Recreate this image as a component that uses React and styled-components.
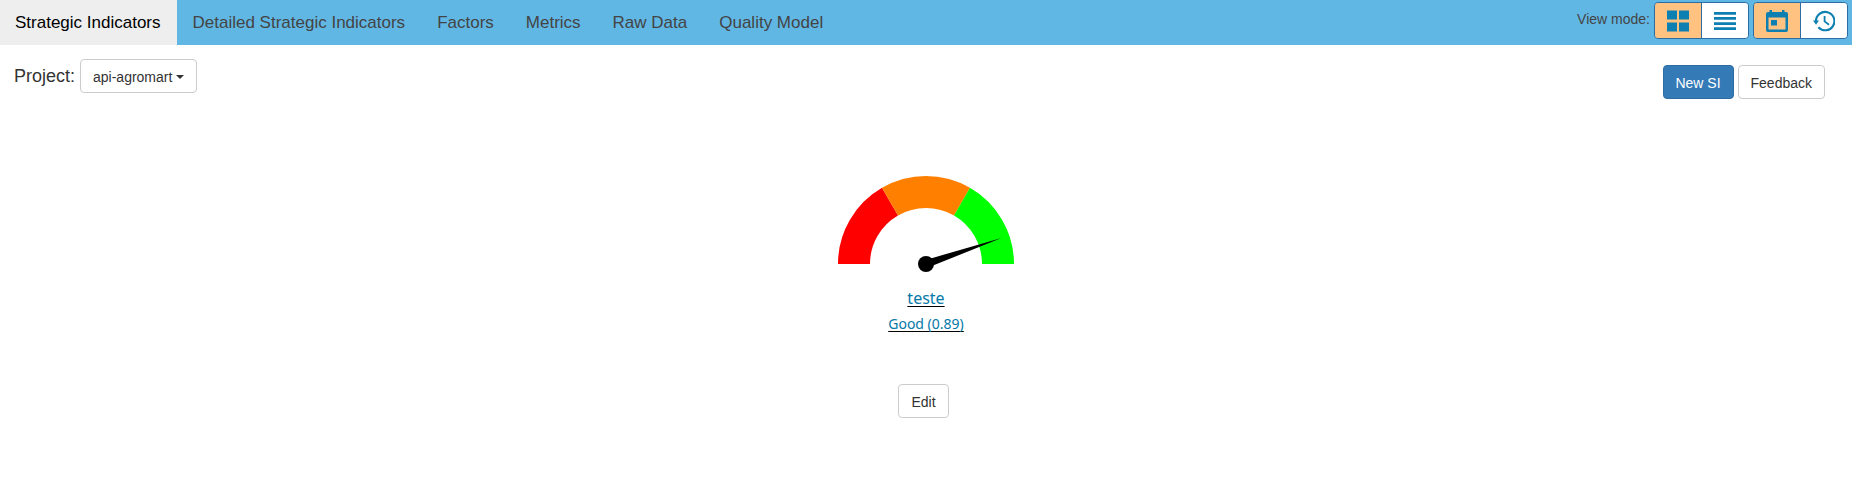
import React from "react";
import styled, { createGlobalStyle, css } from "styled-components";

const GlobalStyle = createGlobalStyle`
  * { box-sizing: border-box; }
  body {
    margin: 0;
    background: #fff;
    color: #333;
    font-family: "Liberation Sans", Arial, sans-serif;
    font-size: 14px;
    line-height: 20px;
  }
`;

const NavBar = styled.nav`
  display: flex;
  justify-content: space-between;
  height: 45px;
  padding-right: 4px;
  background: #61b7e4;
`;

const Tabs = styled.div`
  display: flex;
`;

const Tab = styled.a`
  padding: 13px 16px 0;
  height: 45px;
  font-size: 17px;
  white-space: nowrap;
  color: ${(p) => (p.$active ? "#000" : "#444")};
  background: ${(p) => (p.$active ? "#eee" : "transparent")};
  &:first-child { padding-left: 15px; }
`;

const ViewMode = styled.div`
  display: flex;
  align-items: flex-start;
  padding-top: 2px;
`;

const ViewLabel = styled.span`
  margin: 7px 4px 0 0;
  color: #444;
`;

const ToggleGroup = styled.div`
  display: flex;
  width: 95px;
  height: 37px;
  border: 1px solid #2e6da4;
  border-radius: 4px;
  overflow: hidden;
  & + & { margin-left: 4px; }
`;

const Toggle = styled.button`
  flex: 1;
  display: flex;
  align-items: center;
  justify-content: center;
  padding: 0;
  border: 0;
  color: #0d7fb0;
  background: ${(p) => (p.$active ? "#ffc280" : "#fff")};
  & + & { border-left: 1px solid #2e6da4; }
  svg { display: block; fill: currentColor; }
`;

const Toolbar = styled.div`
  display: flex;
  justify-content: space-between;
  align-items: flex-start;
  padding: 14px 27px 0 14px;
  height: 131px;
`;

const ProjectPicker = styled.div`
  display: flex;
  align-items: flex-start;
`;

const ProjectLabel = styled.span`
  width: 66px;
  padding-top: 7px;
  font-size: 18px;
`;

const Actions = styled.div`
  display: flex;
  gap: 4px;
  padding-top: 6px;
`;

const Button = styled.button`
  display: inline-flex;
  align-items: center;
  height: 34px;
  padding: 1px 12px 0;
  border: 1px solid #ccc;
  border-radius: 4px;
  background: #fff;
  color: #333;
  font: inherit;
  white-space: nowrap;
  ${(p) =>
    p.$primary &&
    css`
      padding-left: 11px;
      border-color: #2e6da4;
      background: #337ab7;
      color: #fff;
    `}
`;

const Caret = styled.span`
  margin-left: 4px;
  border-top: 4px solid currentColor;
  border-left: 4px solid transparent;
  border-right: 4px solid transparent;
`;

const Indicator = styled.main`
  display: flex;
  flex-direction: column;
  align-items: center;
`;

const GaugeDrawing = styled.svg`
  display: block;
  margin-bottom: 9px;
`;

const GaugeText = styled.a`
  color: #0579a8;
  font-family: "Noto Sans", sans-serif;
  font-size: ${(p) => p.$size}px;
  line-height: 26px;
  text-decoration: underline 1px #000;
  text-decoration-skip-ink: none;
  text-underline-offset: 2px;
`;

const EditArea = styled.div`
  display: flex;
  margin-top: 47px;
  padding-right: 5px;
`;

function Gauge() {
  return (
    <GaugeDrawing width="180" height="100" viewBox="-90 -88 180 100">
      <path d="M-88 0A88 88 0 0 1-44-76.21L-28-48.5A56 56 0 0 0-56 0Z" fill="#f00" />
      <path d="M-44-76.21A88 88 0 0 1 44-76.21L28-48.5A56 56 0 0 0-28-48.5Z" fill="#ff8000" />
      <path d="M44-76.21A88 88 0 0 1 88 0H56A56 56 0 0 0 28-48.5Z" fill="#0f0" />
      <circle r="8" />
      <path d="M-1.3-3.8L75.5-26L1.3 3.8Z" />
    </GaugeDrawing>
  );
}

const tabs = ["Strategic Indicators", "Detailed Strategic Indicators", "Factors", "Metrics", "Raw Data", "Quality Model"];

export default function App() {
  return (
    <>
      <GlobalStyle />
      <NavBar>
        <Tabs>
          {tabs.map((label, i) => (
            <Tab key={label} $active={i === 0}>{label}</Tab>
          ))}
        </Tabs>
        <ViewMode>
          <ViewLabel>View mode:</ViewLabel>
          <ToggleGroup>
            <Toggle $active aria-label="Grid">
              <svg width="22" height="22" viewBox="0 0 22 22">
                <path d="M0 .5h10v9H0zM12 .5h10v9H12zM0 12.5h10v9H0zM12 12.5h10v9H12z" />
              </svg>
            </Toggle>
            <Toggle aria-label="List">
              <svg width="22" height="18" viewBox="0 0 22 18">
                <path d="M0 0h22v2.7H0zM0 5.1h22v2.7H0zM0 10.2h22v2.7H0zM0 15.3h22V18H0z" />
              </svg>
            </Toggle>
          </ToggleGroup>
          <ToggleGroup>
            <Toggle $active aria-label="Current">
              <svg width="22" height="22" viewBox="0 0 22 22">
                <path fillRule="evenodd" d="M3.5 0H6v2h10V0h2.5v2H20a2 2 0 0 1 2 2v16a2 2 0 0 1-2 2H2a2 2 0 0 1-2-2V4a2 2 0 0 1 2-2h1.5zM2.5 7.5v12h17v-12zM5 10h6v5.5H5z" />
              </svg>
            </Toggle>
            <Toggle aria-label="Historical">
              <svg width="22" height="22" viewBox="0 0 22 22">
                <path d="M3 11.3A9.2 9.2 0 1 1 5.4 17.3" fill="none" stroke="currentColor" strokeWidth="2.1" />
                <path d="M0 10.5h6L3 14.8z" />
                <path d="M11.6 6v5.4l4.4 3.4" fill="none" stroke="currentColor" strokeWidth="1.8" />
              </svg>
            </Toggle>
          </ToggleGroup>
        </ViewMode>
      </NavBar>
      <Toolbar>
        <ProjectPicker>
          <ProjectLabel>Project:</ProjectLabel>
          <Button>api-agromart<Caret /></Button>
        </ProjectPicker>
        <Actions>
          <Button $primary>New SI</Button>
          <Button>Feedback</Button>
        </Actions>
      </Toolbar>
      <Indicator>
        <Gauge />
        <GaugeText $size={16}>teste</GaugeText>
        <GaugeText $size={14}>Good (0.89)</GaugeText>
        <EditArea><Button>Edit</Button></EditArea>
      </Indicator>
    </>
  );
}
